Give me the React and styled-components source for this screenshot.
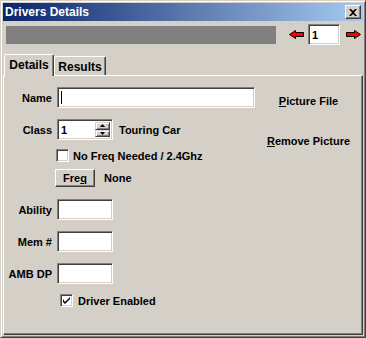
import styled, { createGlobalStyle } from "styled-components";

const GlobalStyle = createGlobalStyle`
  html, body {
    margin: 0;
    padding: 0;
    background: #d4d0c8;
  }
  body {
    font-family: "Liberation Sans", Arial, sans-serif;
    font-size: 11px;
    font-weight: bold;
    color: #000;
  }
`;

const Window = styled.div`
  width: 366px;
  height: 338px;
  box-sizing: border-box;
  background: #d4d0c8;
  border: 1px solid;
  border-color: #d4d0c8 #404040 #404040 #d4d0c8;
  box-shadow: inset 1px 1px #fff, inset -1px -1px #808080;
  padding: 2px;
  display: flex;
  flex-direction: column;
`;

const TitleBar = styled.div`
  height: 18px;
  flex: none;
  display: flex;
  align-items: center;
  justify-content: space-between;
  padding: 0 2px;
  background: linear-gradient(to right, #0a246a, #a6caf0);
  color: #fff;
  font-size: 12px;
`;

const CloseButton = styled.div`
  width: 16px;
  height: 14px;
  box-sizing: border-box;
  background: #d4d0c8;
  border: 1px solid;
  border-color: #fff #404040 #404040 #fff;
  box-shadow: inset -1px -1px #808080;
  display: flex;
  align-items: center;
  justify-content: center;
`;

const Toolbar = styled.div`
  margin-top: 3px;
  height: 21px;
  display: flex;
  align-items: center;
`;

const Progress = styled.div`
  margin-left: 3px;
  width: 270px;
  height: 18px;
  background: #808080;
`;

const Arrow = styled.svg`
  margin-left: ${(p) => p.$gap}px;
  display: block;
`;

const Field = styled.div`
  box-sizing: border-box;
  width: ${(p) => p.$w}px;
  height: 21px;
  background: #fff;
  border: 1px solid;
  border-color: #808080 #fff #fff #808080;
  box-shadow: inset 1px 1px #404040, inset -1px -1px #d4d0c8;
  margin-left: ${(p) => p.$gap || 0}px;
  padding: 0 2px 0 3px;
  display: flex;
  align-items: center;
  position: relative;
`;

const Caret = styled.span`
  width: 1px;
  height: 13px;
  background: #000;
`;

const Tabs = styled.div`
  margin-top: 9px;
  height: 22px;
  display: flex;
  align-items: flex-end;
  padding-left: 1px;
  position: relative;
  z-index: 1;
`;

const Tab = styled.div`
  box-sizing: border-box;
  width: ${(p) => p.$w}px;
  height: ${(p) => (p.$active ? 22 : 19)}px;
  margin-bottom: ${(p) => (p.$active ? 0 : 1)}px;
  background: #d4d0c8;
  border-top: 1px solid #fff;
  border-left: 1px solid #fff;
  border-right: 1px solid #404040;
  border-radius: 2px 2px 0 0;
  box-shadow: inset -1px 0 #808080;
  display: flex;
  justify-content: center;
  padding-top: ${(p) => (p.$active ? 3 : 3)}px;
  font-size: 12px;
`;

const Panel = styled.div`
  flex: 1;
  margin-top: -1px;
  border: 1px solid;
  border-color: #fff #404040 #404040 #fff;
  box-shadow: inset -1px -1px #808080;
  display: flex;
`;

const LeftCol = styled.div`
  width: 251px;
  padding-top: 11px;
  display: flex;
  flex-direction: column;
`;

const Row = styled.div`
  display: flex;
  align-items: center;
  margin-top: ${(p) => p.$top || 0}px;
  padding-left: ${(p) => p.$indent || 0}px;
`;

const Label = styled.span`
  width: 48px;
  margin-right: 5px;
  text-align: right;
`;

const Text = styled.span`
  margin-left: ${(p) => p.$gap || 0}px;
`;

const SpinButtons = styled.div`
  position: absolute;
  right: 2px;
  top: 2px;
  bottom: 2px;
  width: 15px;
  display: flex;
  flex-direction: column;
`;

const SpinHalf = styled.div`
  flex: 1;
  box-sizing: border-box;
  background: #d4d0c8;
  border: 1px solid;
  border-color: #d4d0c8 #404040 #404040 #d4d0c8;
  box-shadow: inset 1px 1px #fff, inset -1px -1px #808080;
  display: flex;
  align-items: center;
  justify-content: center;
`;

const CheckBox = styled.div`
  box-sizing: border-box;
  width: 13px;
  height: 13px;
  background: #fff;
  border: 1px solid;
  border-color: #808080 #fff #fff #808080;
  box-shadow: inset 1px 1px #404040, inset -1px -1px #d4d0c8;
  display: flex;
  align-items: center;
  justify-content: center;
`;

const Button = styled.div`
  box-sizing: border-box;
  width: 40px;
  height: 18px;
  background: #d4d0c8;
  border: 1px solid;
  border-color: #fff #404040 #404040 #fff;
  box-shadow: inset -1px -1px #808080;
  display: flex;
  align-items: center;
  justify-content: center;
`;

const RightCol = styled.div`
  width: 107px;
  padding-top: 16px;
  display: flex;
  flex-direction: column;
  align-items: center;
  gap: 22px;
`;

const LinkButton = styled.div`
  height: 18px;
  line-height: 18px;
  white-space: nowrap;
`;

function LeftArrow() {
  return (
    <Arrow $gap={13} width="15" height="9" viewBox="0 0 15 9">
      <path
        d="M0.5 4.5 L6.5 0.5 L6.5 2.5 L14.5 2.5 L14.5 6.5 L6.5 6.5 L6.5 8.5 Z"
        fill="#ff0000"
        stroke="#000"
        strokeWidth="1"
      />
    </Arrow>
  );
}

function RightArrow() {
  return (
    <Arrow $gap={5} width="16" height="9" viewBox="0 0 16 9">
      <path
        d="M15.5 4.5 L9.5 0.5 L9.5 2.5 L1.5 2.5 L1.5 6.5 L9.5 6.5 L9.5 8.5 Z"
        fill="#ff0000"
        stroke="#000"
        strokeWidth="1"
      />
    </Arrow>
  );
}

function Check({ checked }) {
  return (
    <CheckBox>
      {checked && (
        <svg width="7" height="7" viewBox="0 0 7 7">
          <path d="M0 2 L0 5 L2 7 L7 2 L7 0 L2 5 Z" fill="#000" />
        </svg>
      )}
    </CheckBox>
  );
}

function Triangle({ up }) {
  return (
    <svg width="5" height="3" viewBox="0 0 5 3">
      <path d={up ? "M0 3 L5 3 L2.5 0 Z" : "M0 0 L5 0 L2.5 3 Z"} fill="#000" />
    </svg>
  );
}

export default function App() {
  return (
    <>
      <GlobalStyle />
      <Window>
        <TitleBar>
          <span>Drivers Details</span>
          <CloseButton>
            <svg width="8" height="7" viewBox="0 0 8 7">
              <path
                d="M0 0 H2 L4 2 L6 0 H8 L5 3.5 L8 7 H6 L4 5 L2 7 H0 L3 3.5 Z"
                fill="#000"
              />
            </svg>
          </CloseButton>
        </TitleBar>

        <Toolbar>
          <Progress />
          <LeftArrow />
          <Field $w={32} $gap={4}>1</Field>
          <RightArrow />
        </Toolbar>

        <Tabs>
          <Tab $w={50} $active>Details</Tab>
          <Tab $w={52}>Results</Tab>
        </Tabs>

        <Panel>
          <LeftCol>
            <Row>
              <Label>Name</Label>
              <Field $w={198}>
                <Caret />
              </Field>
            </Row>
            <Row $top={11}>
              <Label>Class</Label>
              <Field $w={56}>
                1
                <SpinButtons>
                  <SpinHalf>
                    <Triangle up />
                  </SpinHalf>
                  <SpinHalf>
                    <Triangle />
                  </SpinHalf>
                </SpinButtons>
              </Field>
              <Text $gap={6}>Touring Car</Text>
            </Row>
            <Row $top={9} $indent={52}>
              <Check />
              <Text $gap={4}>No Freq Needed / 2.4Ghz</Text>
            </Row>
            <Row $top={7} $indent={51}>
              <Button>
                <span>
                  Fre<u>q</u>
                </span>
              </Button>
              <Text $gap={9}>None</Text>
            </Row>
            <Row $top={12}>
              <Label>Ability</Label>
              <Field $w={56} />
            </Row>
            <Row $top={11}>
              <Label>Mem #</Label>
              <Field $w={56} />
            </Row>
            <Row $top={11}>
              <Label>AMB DP</Label>
              <Field $w={56} />
            </Row>
            <Row $top={10} $indent={56}>
              <Check checked />
              <Text $gap={5}>Driver Enabled</Text>
            </Row>
          </LeftCol>
          <RightCol>
            <LinkButton>
              <u>P</u>icture File
            </LinkButton>
            <LinkButton>
              <u>R</u>emove Picture
            </LinkButton>
          </RightCol>
        </Panel>
      </Window>
    </>
  );
}
